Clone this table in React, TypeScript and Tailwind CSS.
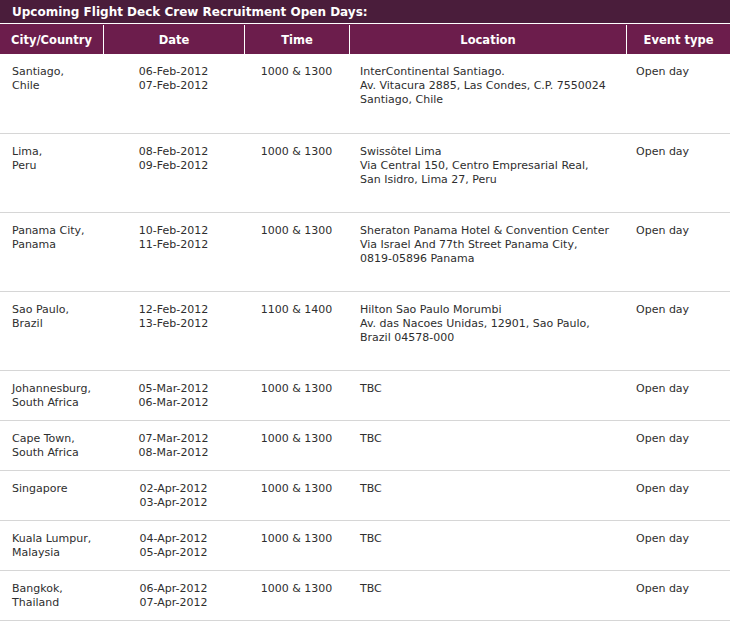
type Row = {
  city: string[]
  dates: string[]
  time: string
  location: string[]
  event: string
  tall?: boolean
}

const rows: Row[] = [
  { city: ["Santiago,", "Chile"], dates: ["06-Feb-2012", "07-Feb-2012"], time: "1000 & 1300", location: ["InterContinental Santiago.", "Av. Vitacura 2885, Las Condes, C.P. 7550024", "Santiago, Chile"], event: "Open day", tall: true },
  { city: ["Lima,", "Peru"], dates: ["08-Feb-2012", "09-Feb-2012"], time: "1000 & 1300", location: ["Swissôtel Lima", "Via Central 150, Centro Empresarial Real,", "San Isidro, Lima 27, Peru"], event: "Open day", tall: true },
  { city: ["Panama City,", "Panama"], dates: ["10-Feb-2012", "11-Feb-2012"], time: "1000 & 1300", location: ["Sheraton Panama Hotel & Convention Center", "Via Israel And 77th Street Panama City,", "0819-05896 Panama"], event: "Open day", tall: true },
  { city: ["Sao Paulo,", "Brazil"], dates: ["12-Feb-2012", "13-Feb-2012"], time: "1100 & 1400", location: ["Hilton Sao Paulo Morumbi", "Av. das Nacoes Unidas, 12901, Sao Paulo,", "Brazil 04578-000"], event: "Open day", tall: true },
  { city: ["Johannesburg,", "South Africa"], dates: ["05-Mar-2012", "06-Mar-2012"], time: "1000 & 1300", location: ["TBC"], event: "Open day" },
  { city: ["Cape Town,", "South Africa"], dates: ["07-Mar-2012", "08-Mar-2012"], time: "1000 & 1300", location: ["TBC"], event: "Open day" },
  { city: ["Singapore"], dates: ["02-Apr-2012", "03-Apr-2012"], time: "1000 & 1300", location: ["TBC"], event: "Open day" },
  { city: ["Kuala Lumpur,", "Malaysia"], dates: ["04-Apr-2012", "05-Apr-2012"], time: "1000 & 1300", location: ["TBC"], event: "Open day" },
  { city: ["Bangkok,", "Thailand"], dates: ["06-Apr-2012", "07-Apr-2012"], time: "1000 & 1300", location: ["TBC"], event: "Open day" },
]

const cols = "grid grid-cols-[103px_141px_105px_277px_104px]"

const Lines = ({ items }: { items: string[] }) => (
  <>
    {items.map((t, i) => <div key={i}>{t}</div>)}
  </>
)

export default function App() {
  return (
    <div className="w-[730px] bg-white font-['DejaVu_Sans',Verdana,sans-serif] text-[11px] leading-[14px] text-[#2e2e2e]">
      <div className="h-[23px] bg-[#4a1d3b] pl-3 pt-px text-[12px] font-bold leading-[23px] text-white">
        Upcoming Flight Deck Crew Recruitment Open Days:
      </div>
      <div className={`${cols} mt-px h-[30px] bg-[#6c1d4c] pt-px text-[11.5px] font-bold leading-[30px] text-white`}>
        <div className="text-center">City/Country</div>
        <div className="border-l border-white text-center">Date</div>
        <div className="border-l border-white text-center">Time</div>
        <div className="border-l border-white text-center">Location</div>
        <div className="border-l border-white text-center">Event type</div>
      </div>
      {rows.map((r, i) => (
        <div
          key={i}
          className={`${cols} border-b border-[#d6d6d6] pt-[11px] ${r.tall ? (i === 0 ? "h-[80px]" : "h-[79px]") : "h-[50px]"}`}
        >
          <div className="pl-3"><Lines items={r.city} /></div>
          <div className="text-center"><Lines items={r.dates} /></div>
          <div className="text-center">{r.time}</div>
          <div className="pl-[11px] whitespace-nowrap"><Lines items={r.location} /></div>
          <div className="pl-[10px]">{r.event}</div>
        </div>
      ))}
    </div>
  )
}
